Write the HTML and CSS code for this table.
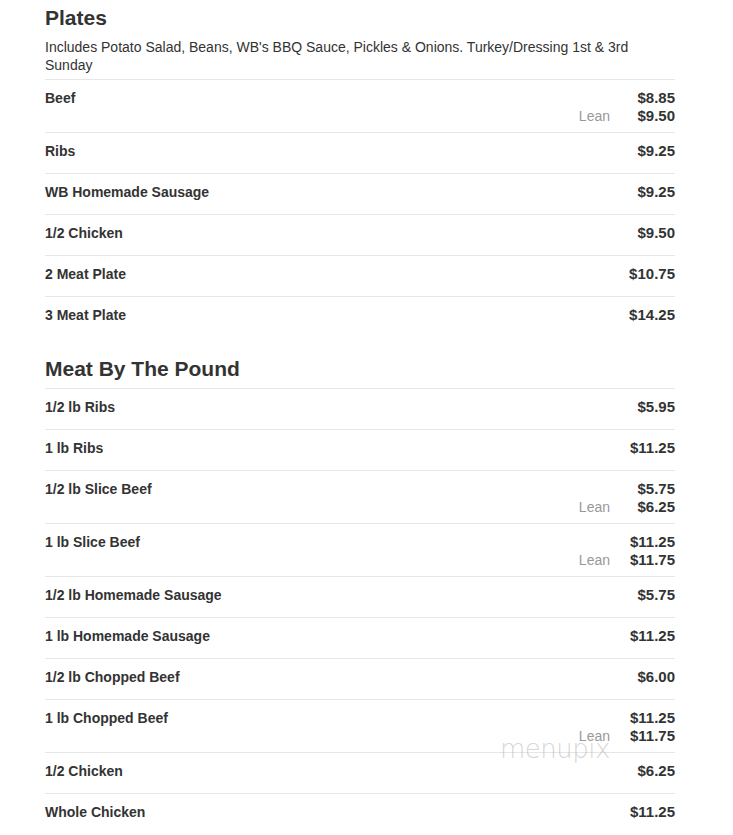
FILE: index.html
```html
<!DOCTYPE html>
<html lang="en">
<head>
<meta charset="utf-8">
<title>Menu</title>
<link rel="stylesheet" href="styles.css">
</head>
<body>
<div class="menu">
  <section class="section">
    <h2 class="section-title">Plates</h2>
    <p class="section-desc">Includes Potato Salad, Beans, WB's BBQ Sauce, Pickles &amp; Onions. Turkey/Dressing 1st &amp; 3rd Sunday</p>
    <div class="row">
      <div class="name">Beef</div>
      <div class="prices">
        <div class="price-line"><span class="label"></span><span class="price">$8.85</span></div>
        <div class="price-line"><span class="label">Lean</span><span class="price">$9.50</span></div>
      </div>
    </div>
    <div class="row">
      <div class="name">Ribs</div>
      <div class="prices"><div class="price-line"><span class="price">$9.25</span></div></div>
    </div>
    <div class="row">
      <div class="name">WB Homemade Sausage</div>
      <div class="prices"><div class="price-line"><span class="price">$9.25</span></div></div>
    </div>
    <div class="row">
      <div class="name">1/2 Chicken</div>
      <div class="prices"><div class="price-line"><span class="price">$9.50</span></div></div>
    </div>
    <div class="row">
      <div class="name">2 Meat Plate</div>
      <div class="prices"><div class="price-line"><span class="price">$10.75</span></div></div>
    </div>
    <div class="row">
      <div class="name">3 Meat Plate</div>
      <div class="prices"><div class="price-line"><span class="price">$14.25</span></div></div>
    </div>
  </section>

  <section class="section">
    <h2 class="section-title">Meat By The Pound</h2>
    <div class="row">
      <div class="name">1/2 lb Ribs</div>
      <div class="prices"><div class="price-line"><span class="price">$5.95</span></div></div>
    </div>
    <div class="row">
      <div class="name">1 lb Ribs</div>
      <div class="prices"><div class="price-line"><span class="price">$11.25</span></div></div>
    </div>
    <div class="row">
      <div class="name">1/2 lb Slice Beef</div>
      <div class="prices">
        <div class="price-line"><span class="label"></span><span class="price">$5.75</span></div>
        <div class="price-line"><span class="label">Lean</span><span class="price">$6.25</span></div>
      </div>
    </div>
    <div class="row">
      <div class="name">1 lb Slice Beef</div>
      <div class="prices">
        <div class="price-line"><span class="label"></span><span class="price">$11.25</span></div>
        <div class="price-line"><span class="label">Lean</span><span class="price">$11.75</span></div>
      </div>
    </div>
    <div class="row">
      <div class="name">1/2 lb Homemade Sausage</div>
      <div class="prices"><div class="price-line"><span class="price">$5.75</span></div></div>
    </div>
    <div class="row">
      <div class="name">1 lb Homemade Sausage</div>
      <div class="prices"><div class="price-line"><span class="price">$11.25</span></div></div>
    </div>
    <div class="row">
      <div class="name">1/2 lb Chopped Beef</div>
      <div class="prices"><div class="price-line"><span class="price">$6.00</span></div></div>
    </div>
    <div class="row">
      <div class="name">1 lb Chopped Beef</div>
      <div class="prices">
        <div class="price-line"><span class="label"></span><span class="price">$11.25</span></div>
        <div class="price-line"><span class="label">Lean</span><span class="price">$11.75</span></div>
      </div>
    </div>
    <div class="row">
      <div class="name">1/2 Chicken</div>
      <div class="prices"><div class="price-line"><span class="price">$6.25</span></div></div>
    </div>
    <div class="row">
      <div class="name">Whole Chicken</div>
      <div class="prices"><div class="price-line"><span class="price">$11.25</span></div></div>
    </div>
  </section>
  <div class="watermark">menupix</div>
</div>
</body>
</html>
```

FILE: styles.css
```css
html, body {
  margin: 0;
  padding: 0;
  background: #fff;
}

body {
  font-family: "Liberation Sans", Arial, sans-serif;
  color: #333;
}

.menu {
  position: relative;
  width: 630px;
  margin-left: 45px;
  padding-top: 6px;
}

.section + .section {
  margin-top: 20px;
}

.section-title {
  margin: 0 0 7px;
  font-size: 21px;
  line-height: 24px;
  font-weight: bold;
  color: #333;
}

.section-desc {
  margin: 8px 0 5px;
  font-size: 14px;
  line-height: 18px;
  color: #333;
}

.row {
  display: flex;
  justify-content: space-between;
  align-items: flex-start;
  border-top: 1px solid #e6e6e6;
  padding: 9px 0 7px;
}

.name {
  font-size: 14px;
  line-height: 18px;
  font-weight: bold;
  min-height: 24px;
  color: #333;
}

.prices {
  display: flex;
  flex-direction: column;
}

.price-line {
  display: flex;
  justify-content: flex-end;
  align-items: baseline;
  line-height: 18px;
}

.label {
  font-size: 14px;
  color: #999;
}

.price {
  width: 65px;
  text-align: right;
  font-size: 15px;
  font-weight: bold;
  color: #333;
}

.watermark {
  position: absolute;
  left: 455px;
  top: 734px;
  font-family: "DejaVu Sans", sans-serif;
  font-size: 26px;
  font-weight: 200;
  letter-spacing: -0.5px;
  color: rgba(150, 150, 150, 0.4);
  pointer-events: none;
}
```
